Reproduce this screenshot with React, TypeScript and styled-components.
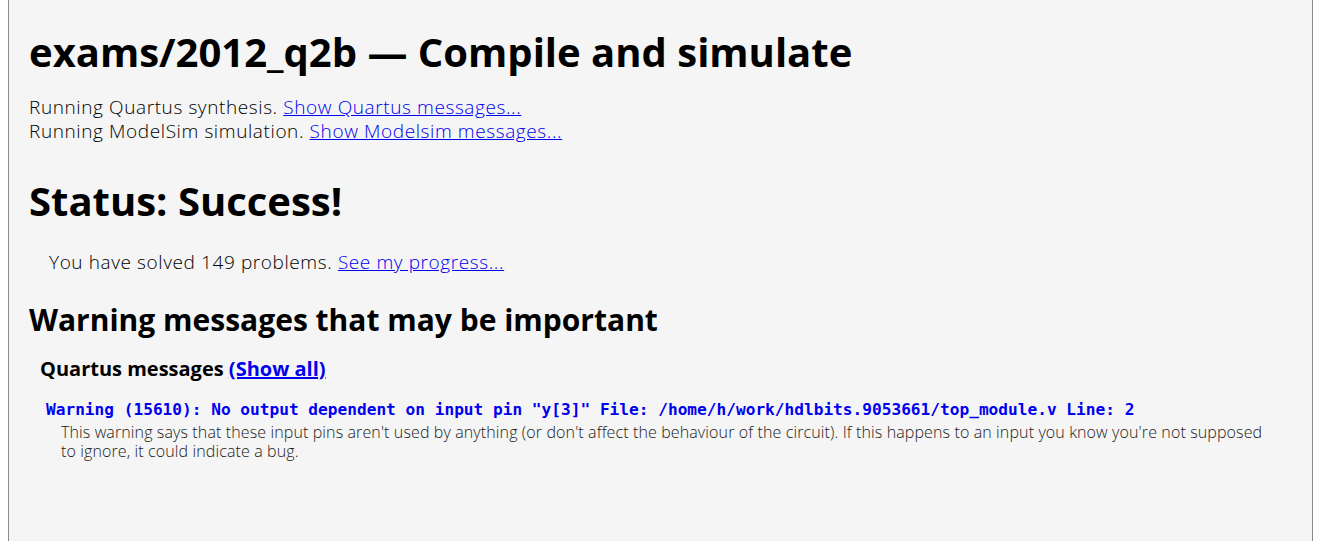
import React from "react";
import styled, { createGlobalStyle } from "styled-components";

const Global = createGlobalStyle`
  html, body { margin: 0; padding: 0; background: #ffffff; }
  body { font-family: "Open Sans", sans-serif; color: #000; }
`;

const Frame = styled.div`
  margin: 0 8px;
  min-height: 541px;
  box-sizing: border-box;
  background: #f5f5f5;
  border-left: 1px solid #8c8c8c;
  border-right: 1px solid #8c8c8c;
  padding: 28px 20px 0 20px;
`;

const Title = styled.h1<{ $gap: number }>`
  font-family: "Open Sans", sans-serif;
  font-weight: 700;
  font-size: 40px;
  line-height: 48px;
  margin: 0 0 ${(p) => p.$gap}px 0;
`;

const Para = styled.p<{ $indent?: number }>`
  font-family: "Open Sans", sans-serif;
  font-weight: 300;
  font-size: 19px;
  letter-spacing: 0.6px;
  line-height: 24px;
  margin: 0;
  padding-left: ${(p) => p.$indent ?? 0}px;
`;

const Link = styled.a`
  color: #0000ee;
  text-decoration: underline;
  cursor: pointer;
`;

const Section = styled.div<{ $top: number }>`
  margin-top: ${(p) => p.$top}px;
`;

const SubTitle = styled.h2`
  font-family: "Open Sans", sans-serif;
  font-weight: 700;
  font-size: 30px;
  line-height: 40px;
  margin: 0 0 15px 0;
`;

const GroupTitle = styled.h3`
  font-family: "Open Sans", sans-serif;
  font-weight: 700;
  font-size: 20px;
  line-height: 28px;
  margin: 0 0 17px 11px;
`;

const Message = styled.div`
  margin-left: 17px;
`;

const Code = styled.div`
  font-family: "DejaVu Sans Mono", monospace;
  font-weight: 700;
  font-size: 16.15px;
  line-height: 20px;
  color: #0000f0;
`;

const Note = styled.p`
  font-family: "Open Sans", sans-serif;
  font-weight: 300;
  font-size: 16px;
  letter-spacing: 0.12px;
  line-height: 19px;
  color: #1a1a1a;
  margin: 3px 0 0 15px;
  max-width: 1220px;
`;

export default function App() {
  return (
    <>
      <Global />
      <Frame>
        <Title $gap={19}>exams/2012_q2b — Compile and simulate</Title>
        <Para>
          Running Quartus synthesis. <Link>Show Quartus messages...</Link>
        </Para>
        <Para>
          Running ModelSim simulation. <Link>Show Modelsim messages...</Link>
        </Para>
        <Section $top={34}>
          <Title $gap={25}>Status: Success!</Title>
        </Section>
        <Para $indent={20}>
          You have solved 149 problems. <Link>See my progress...</Link>
        </Para>
        <Section $top={26}>
          <SubTitle>Warning messages that may be important</SubTitle>
          <GroupTitle>
            Quartus messages <Link>(Show all)</Link>
          </GroupTitle>
          <Message>
            <Code>
              Warning (15610): No output dependent on input pin "y[3]" File:
              /home/h/work/hdlbits.9053661/top_module.v Line: 2
            </Code>
            <Note>
              This warning says that these input pins aren't used by anything
              (or don't affect the behaviour of the circuit). If this happens to
              an input you know you're not supposed to ignore, it could indicate
              a bug.
            </Note>
          </Message>
        </Section>
      </Frame>
    </>
  );
}
